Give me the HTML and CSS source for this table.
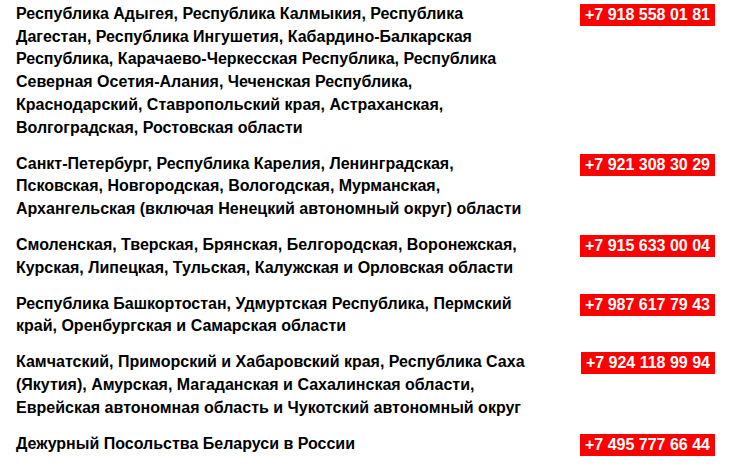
FILE: index.html
```html
<!DOCTYPE html>
<html lang="ru">
<head>
<meta charset="utf-8">
<title>Контакты</title>
<link rel="stylesheet" href="styles.css">
</head>
<body>
<div class="list">
  <div class="row">
    <div class="region">Республика Адыгея, Республика Калмыкия, Республика Дагестан, Республика Ингушетия, Кабардино-Балкарская Республика, Карачаево-Черкесская Республика, Республика Северная Осетия-Алания, Чеченская Республика, Краснодарский, Ставропольский края, Астраханская, Волгоградская, Ростовская области</div>
    <div class="phone"><span class="badge">+7 918 558 01 81</span></div>
  </div>
  <div class="row">
    <div class="region">Санкт-Петербург, Республика Карелия, Ленинградская, Псковская, Новгородская, Вологодская, Мурманская, Архангельская (включая Ненецкий автономный округ) области</div>
    <div class="phone"><span class="badge">+7 921 308 30 29</span></div>
  </div>
  <div class="row">
    <div class="region">Смоленская, Тверская, Брянская, Белгородская, Воронежская, Курская, Липецкая, Тульская, Калужская и Орловская области</div>
    <div class="phone"><span class="badge">+7 915 633 00 04</span></div>
  </div>
  <div class="row">
    <div class="region">Республика Башкортостан, Удмуртская Республика, Пермский край, Оренбургская и Самарская области</div>
    <div class="phone"><span class="badge">+7 987 617 79 43</span></div>
  </div>
  <div class="row">
    <div class="region">Камчатский, Приморский и Хабаровский края, Республика Саха (Якутия), Амурская, Магаданская и Сахалинская области, Еврейская автономная область и Чукотский автономный округ</div>
    <div class="phone"><span class="badge">+7 924 118 99 94</span></div>
  </div>
  <div class="row">
    <div class="region">Дежурный Посольства Беларуси в России</div>
    <div class="phone"><span class="badge">+7 495 777 66 44</span></div>
  </div>
</div>
</body>
</html>
```
FILE: styles.css
```css
html, body {
  margin: 0;
  padding: 0;
  background: #fff;
}
body {
  font-family: "Liberation Sans", Arial, sans-serif;
  font-weight: bold;
  color: #000;
}
.list {
  display: flex;
  flex-direction: column;
  gap: 13.3px;
  padding: 3px 16px 0 16px;
}
.row {
  display: grid;
  grid-template-columns: 512px 1fr;
  align-items: start;
}
.region {
  font-size: 16px;
  line-height: 22.7px;
}
.phone {
  display: flex;
  justify-content: flex-end;
  padding-top: 1px;
}
.badge {
  display: block;
  background: #ff0000;
  color: #fff;
  font-size: 16px;
  line-height: 22px;
  padding: 0 5px;
  white-space: nowrap;
}
```
